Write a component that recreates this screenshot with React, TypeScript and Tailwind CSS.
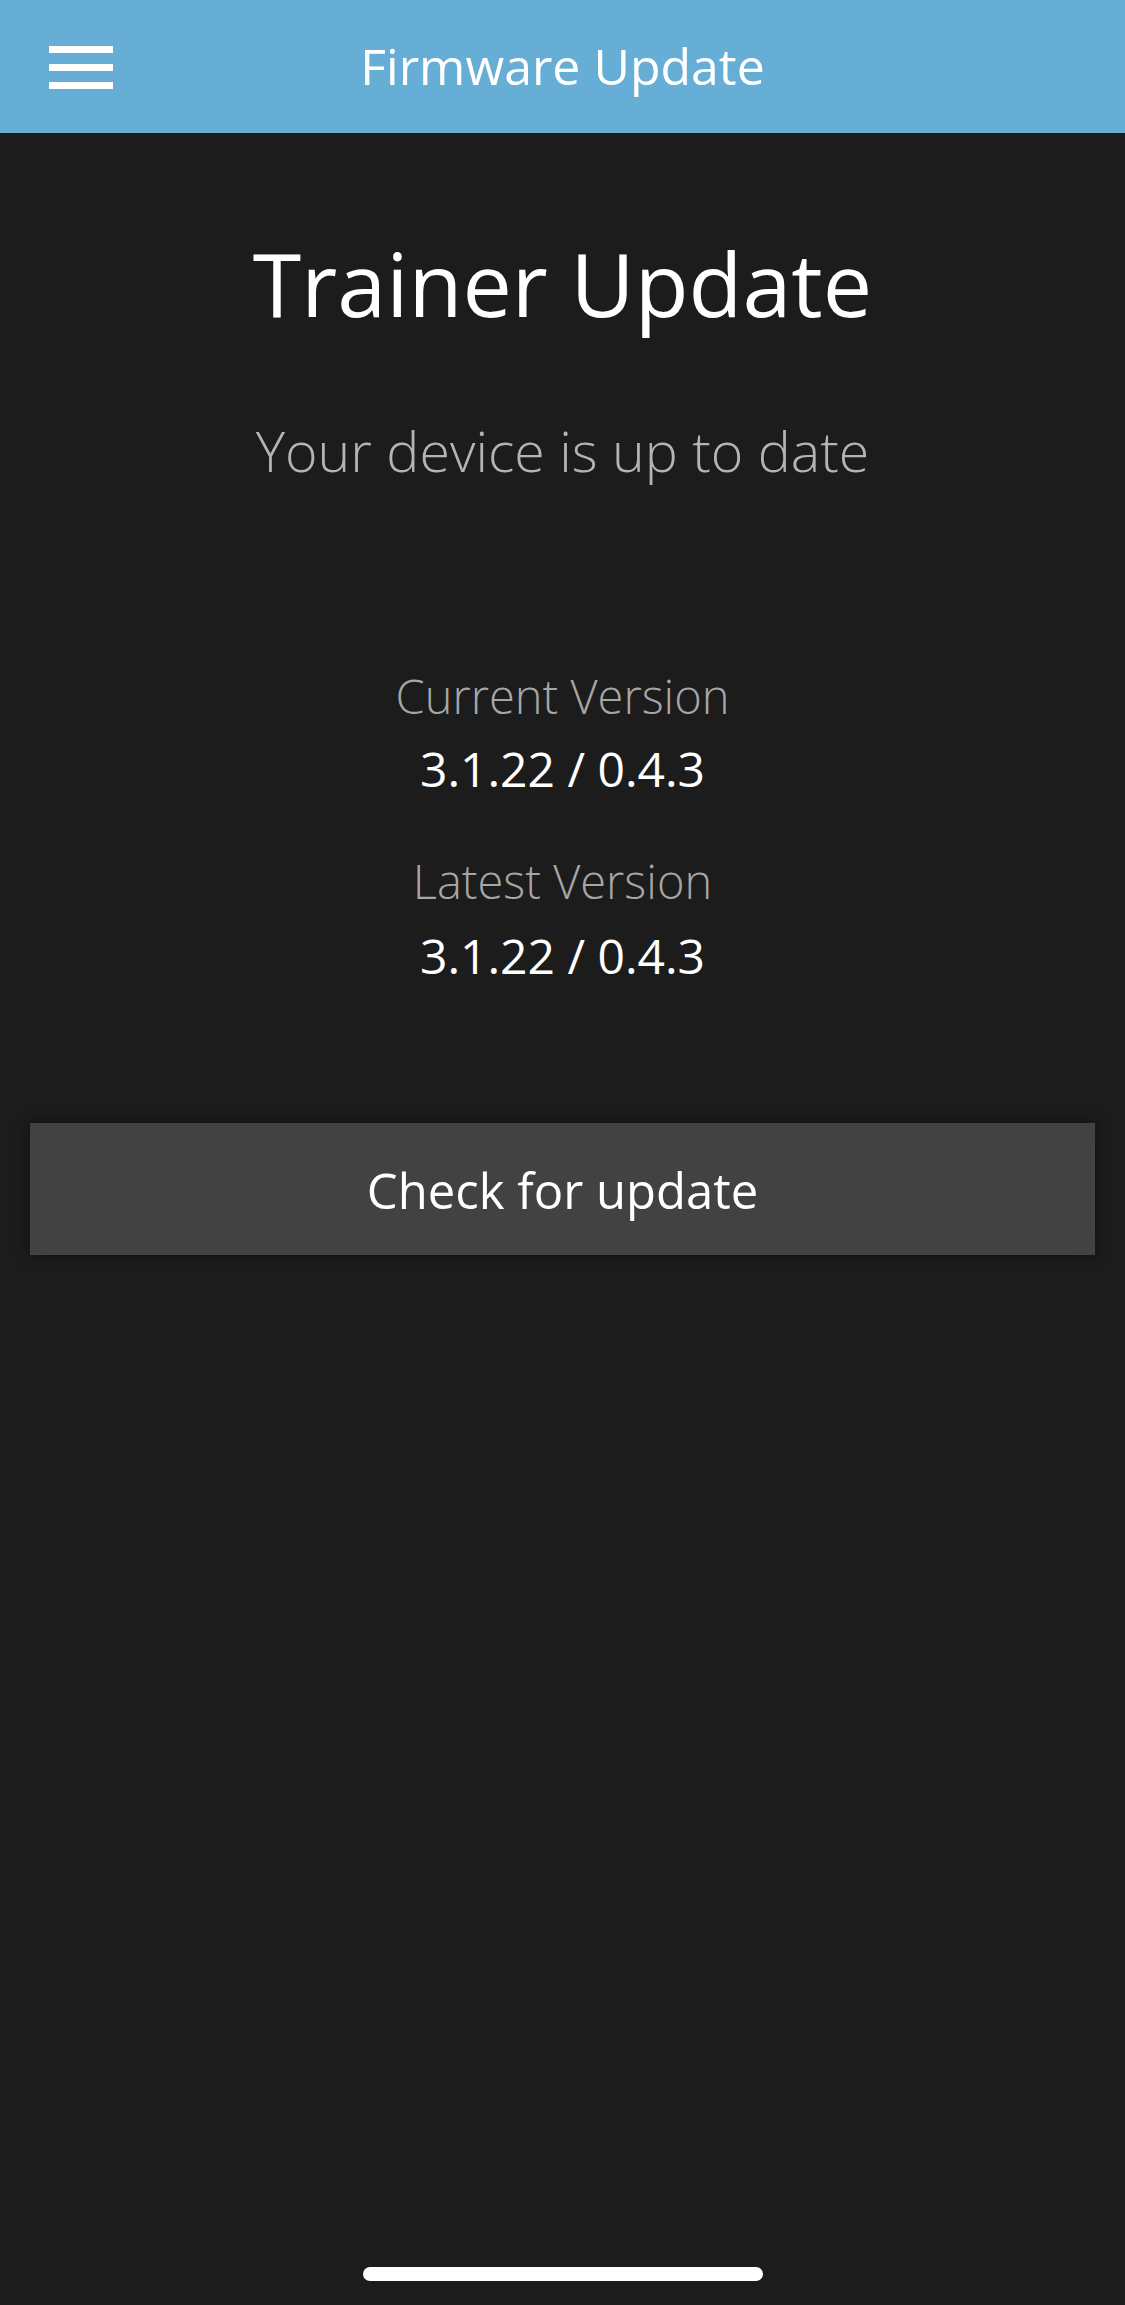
import React from "react";

export default function App() {
  const font = { fontFamily: '"Open Sans", "Noto Sans", sans-serif' };
  return (
    <div className="min-h-[2305px] w-full bg-[#1c1c1c] flex flex-col" style={font}>
      <header className="relative h-[133px] bg-[#67aed6] flex items-center justify-center shrink-0">
        <button className="absolute left-[49px] top-[46px] flex flex-col gap-[11px]" aria-label="Menu">
          <span className="block w-[64px] h-[7px] bg-white" />
          <span className="block w-[64px] h-[7px] bg-white" />
          <span className="block w-[64px] h-[7px] bg-white" />
        </button>
        <h1 className="text-white text-[50px] leading-none font-normal -mt-[2px]">Firmware Update</h1>
      </header>

      <main className="flex flex-col items-center">
        <h2 className="mt-[106px] text-white text-[88px] leading-none font-normal">Trainer Update</h2>
        <p className="mt-[96px] text-[#b4b4b4] text-[55.5px] leading-none font-light">Your device is up to date</p>

        <p className="mt-[194px] text-[#a6a6a6] text-[47px] leading-none font-light">Current Version</p>
        <p className="mt-[25px] text-white text-[48px] leading-none font-normal">3.1.22 / 0.4.3</p>

        <p className="mt-[65px] text-[#a6a6a6] text-[47px] leading-none font-light">Latest Version</p>
        <p className="mt-[27px] text-white text-[48px] leading-none font-normal">3.1.22 / 0.4.3</p>

        <div className="self-stretch px-[30px] mt-[143px]">
          <button className="w-full h-[132px] bg-[#424242] text-white text-[49px] leading-none flex items-center justify-center pt-[4px] shadow-[0_0_16px_rgba(0,0,0,0.45)]">
            Check for update
          </button>
        </div>
      </main>

      <div className="mt-auto flex justify-center pb-[24px]">
        <div className="w-[400px] h-[14px] rounded-full bg-white" />
      </div>
    </div>
  );
}
